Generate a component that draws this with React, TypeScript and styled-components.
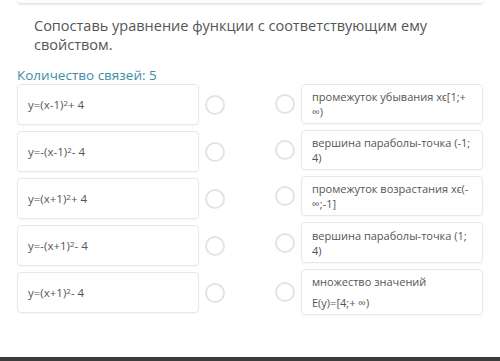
import React from "react"
import styled, { createGlobalStyle } from "styled-components"

const GlobalStyle = createGlobalStyle`
  html, body {
    margin: 0;
    padding: 0;
    background: #fff;
  }
  body {
    font-family: "Open Sans", "Liberation Sans", sans-serif;
    color: #555;
  }
`

const Page = styled.div`
  width: 500px;
  height: 361px;
  overflow: hidden;
  display: flex;
  flex-direction: column;
  background: #fff;
`

const TopCard = styled.div`
  height: 3px;
  margin: 0 17px 0 18px;
  background: #fff;
  border-radius: 0 0 4px 4px;
  box-shadow: 0 1px 3px rgba(0, 0, 0, 0.18);
`

const Title = styled.h2`
  margin: 13px 60px 0 34px;
  font-size: 14.5px;
  line-height: 19px;
  font-weight: 400;
  color: #555;
`

const Count = styled.div`
  margin: 13px 0 0 17px;
  font-size: 13.5px;
  line-height: 17px;
  color: #3d8ea6;
`

const Board = styled.div`
  display: flex;
  justify-content: space-between;
  margin: 0 17px;
`

const Column = styled.div`
  display: flex;
  flex-direction: column;
  gap: 6px;
`

const Item = styled.div`
  display: flex;
  align-items: center;
  gap: 6px;
`

const Box = styled.div<{ $h: number; $side: "left" | "right" }>`
  box-sizing: border-box;
  width: 182px;
  height: ${p => p.$h}px;
  padding: 0 4px 0 10px;
  display: flex;
  flex-direction: column;
  justify-content: center;
  border: 1px solid #e8e8e8;
  border-radius: 4px;
  box-shadow: 0 1px 2px rgba(0, 0, 0, 0.04);
  font-size: ${p => (p.$side === "left" ? 11.5 : 11)}px;
  line-height: 15px;
  color: #555;
  white-space: nowrap;
`

const Line = styled.div<{ $mt?: number }>`
  margin-top: ${p => p.$mt || 0}px;
`

const Sup = styled.span`
  font-size: 8px;
  vertical-align: 3px;
  line-height: 0;
`

const Circle = styled.div`
  box-sizing: border-box;
  width: 20px;
  height: 20px;
  border-radius: 50%;
  border: 2px solid #e3e3e3;
  background: #fff;
  flex-shrink: 0;
`

const BottomBar = styled.div`
  margin-top: auto;
  height: 4px;
  background: #3b3b3b;
`

const left: [string, string][] = [
  ["y=(x-1)", "+ 4"],
  ["y=-(x-1)", "- 4"],
  ["y=(x+1)", "+ 4"],
  ["y=-(x+1)", "- 4"],
  ["y=(x+1)", "- 4"],
]

const right: { h: number; lines: string[]; mt?: number }[] = [
  { h: 40, lines: ["промежуток убывания xϵ[1;+", "∞)"] },
  { h: 40, lines: ["вершина параболы-точка (-1;", "4)"] },
  { h: 40, lines: ["промежуток возрастания xϵ(-", "∞;-1]"] },
  { h: 41, lines: ["вершина параболы-точка (1;", "4)"] },
  { h: 46, lines: ["множество значений", "E(y)=[4;+ ∞)"], mt: 6 },
]

export default function App() {
  return (
    <Page>
      <GlobalStyle />
      <TopCard />
      <Title>Сопоставь уравнение функции с соответствующим ему свойством.</Title>
      <Count>Количество связей: 5</Count>
      <Board>
        <Column>
          {left.map(([a, b], i) => (
            <Item key={i}>
              <Box $h={41} $side="left">
                <Line>
                  {a}
                  <Sup>2</Sup>
                  {b}
                </Line>
              </Box>
              <Circle />
            </Item>
          ))}
        </Column>
        <Column>
          {right.map((r, i) => (
            <Item key={i}>
              <Circle />
              <Box $h={r.h} $side="right">
                <Line>{r.lines[0]}</Line>
                <Line $mt={r.mt}>{r.lines[1]}</Line>
              </Box>
            </Item>
          ))}
        </Column>
      </Board>
      <BottomBar />
    </Page>
  )
}
